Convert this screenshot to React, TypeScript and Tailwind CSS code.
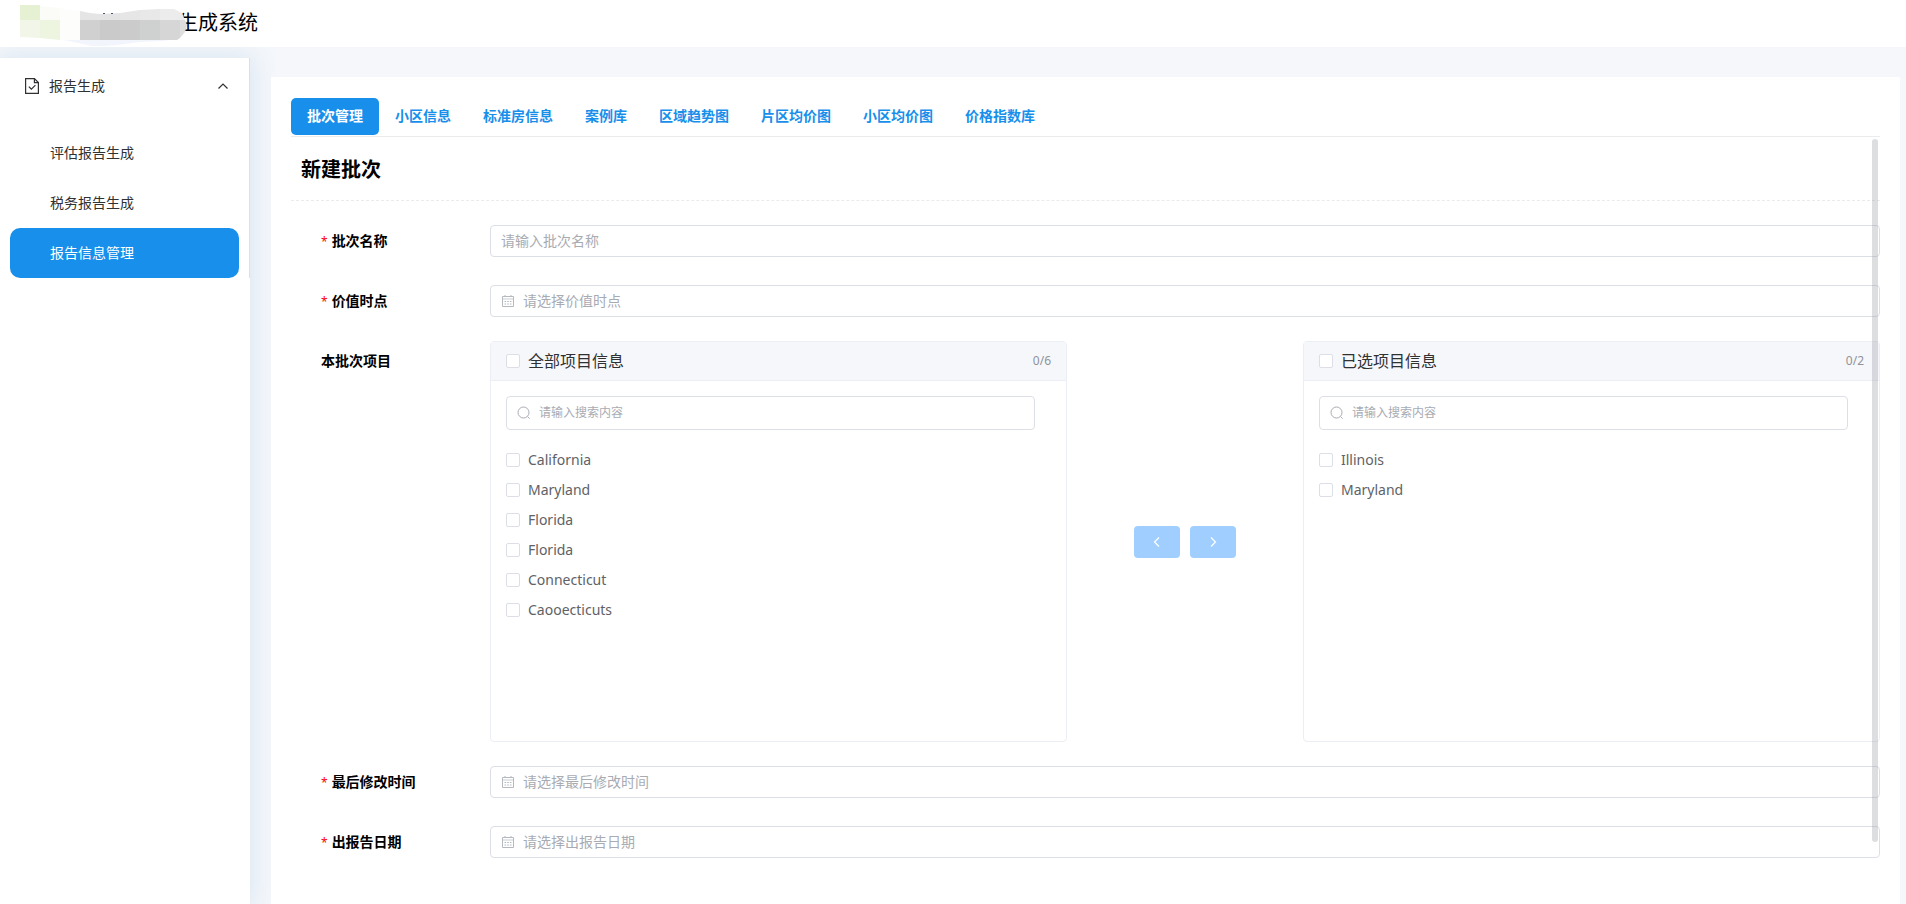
import { useState } from 'react'
import type { ReactNode } from 'react'

const TABS = ['批次管理', '小区信息', '标准房信息', '案例库', '区域趋势图', '片区均价图', '小区均价图', '价格指数库']

const MENU = ['评估报告生成', '税务报告生成', '报告信息管理']

const ALL_PROJECTS = ['California', 'Maryland', 'Florida', 'Florida', 'Connecticut', 'Caooecticuts']
const PICKED_PROJECTS = ['Illinois', 'Maryland']

const CHECKBOX =
  'size-[14px] shrink-0 appearance-none rounded-xs border border-[#dcdfe6] bg-white checked:border-[#188fea] checked:bg-[#188fea]'

function LogoMark() {
  return (
    <svg width="188" height="47" viewBox="0 0 188 47" className="relative z-10 shrink-0" aria-hidden="true">
      <path d="M64 39h112l-14 2-22 1-22 3-14 1H92l-14-3-14-3z" fill="#f2f5fb" />
      <path d="M20 5h20v15H20z" fill="#e6f0d3" />
      <path d="M20 20h20v18l-20-1z" fill="#f2f6e8" />
      <path d="M40 6l20 2v12H40z" fill="#fbfcf8" />
      <path d="M40 20h20v20l-20-2z" fill="#edf4df" />
      <path d="M60 8l20 3v29H60z" fill="#fdfdfb" />
      <path d="M80 11l10 2 10 1v6H80z" fill="#e5e5e5" />
      <path d="M100 14l20-1v7h-20z" fill="#e4e4e4" />
      <path d="M120 13l20-3v10h-20z" fill="#e6e6e6" />
      <path d="M140 10l20-1v11h-20z" fill="#e8e8e8" />
      <path d="M160 9h14l8 4 3 7h-25z" fill="#ececec" />
      <path d="M80 20h20v20H80z" fill="#cfd0cf" />
      <path d="M100 20h20v20h-20z" fill="#cacaca" />
      <path d="M120 20h20v20h-20z" fill="#cbcbcb" />
      <path d="M140 20h20v20h-20z" fill="#cfd0d0" />
      <path d="M160 20h20v18l-3 2h-17z" fill="#d6d6d6" />
      <path d="M180 20h5l2 5-2 7-5 6z" fill="#dedede" />
      <path d="M103 13h2v1h-2zM111 13h2v1h-2z" fill="#4a5a72" />
    </svg>
  )
}

function DocIcon() {
  return (
    <svg width="16" height="18" viewBox="0 0 16 18" fill="none" stroke="#303133" strokeWidth="1.2" aria-hidden="true">
      <path d="M1.6 1.6h8.8l4 4v10.8H1.6z" />
      <path d="M10.4 1.6v4h4" />
      <path d="M4.8 9.6l2.6 2.6 4-4" />
    </svg>
  )
}

function CalendarIcon() {
  return (
    <svg width="14" height="14" viewBox="0 0 14 14" fill="none" stroke="#b4b8bf" aria-hidden="true">
      <path d="M1.5 2.5h11v10h-11z" />
      <path d="M1 5h12" strokeOpacity="0.7" />
      <path d="M4 1v2M10 1v2" />
      <path d="M3.5 7.5h7M3.5 10h7" strokeDasharray="1.6 1.1" />
    </svg>
  )
}

function SearchIcon() {
  return (
    <svg width="14" height="14" viewBox="0 0 14 14" fill="none" stroke="#a8abb2" aria-hidden="true">
      <circle cx="6.5" cy="6.5" r="5.5" />
      <path d="M10.6 10.6l2 2" />
    </svg>
  )
}

function Chevron({ d, className }: { d: string; className?: string }) {
  return (
    <svg
      width="12"
      height="12"
      viewBox="0 0 12 12"
      fill="none"
      stroke="currentColor"
      strokeWidth="1.2"
      className={className}
      aria-hidden="true"
    >
      <path d={d} />
    </svg>
  )
}

function RowLabel({ id, label, required }: { id?: string; label: string; required?: boolean }) {
  const content = (
    <>
      {required ? <span className="mr-1 text-xs font-normal text-[#f00]">*</span> : null}
      {label}
    </>
  )

  // the transfer row labels a whole group, so it has no single control to point at
  return id ? (
    <label htmlFor={id} className="w-[199px] shrink-0 pl-[30px] text-sm leading-8 font-bold text-black">
      {content}
    </label>
  ) : (
    <span className="w-[199px] shrink-0 pl-[30px] text-sm leading-10 font-bold text-black">{content}</span>
  )
}

function FormRow({ id, label, required, children }: { id?: string; label: string; required?: boolean; children: ReactNode }) {
  return (
    <div className="flex items-start">
      <RowLabel id={id} label={label} required={required} />
      <div className="min-w-0 flex-1">{children}</div>
    </div>
  )
}

function TextField({ id, placeholder, date }: { id: string; placeholder: string; date?: boolean }) {
  return (
    <div className="flex h-8 items-center gap-2 rounded border border-[#dcdfe6] bg-white px-[10px]">
      {date ? <CalendarIcon /> : null}
      <input id={id} type="text" placeholder={placeholder} className="min-w-0 flex-1 text-sm outline-none placeholder:text-[#a8abb2]" />
    </div>
  )
}

function TransferPanel({ id, title, items }: { id: string; title: string; items: string[] }) {
  const [checked, setChecked] = useState<number[]>([])

  const toggle = (index: number) => {
    setChecked((prev) => (prev.includes(index) ? prev.filter((i) => i !== index) : [...prev, index]))
  }

  return (
    <section className="min-h-[401px] min-w-0 flex-1 rounded border border-[#ebeef5] bg-white">
      <header className="flex h-[39px] items-center border-b border-[#ebeef5] bg-[#f5f7fb] px-[15px]">
        <label className="flex flex-1 items-center gap-2 text-base text-[#303133]">
          <input
            type="checkbox"
            className={CHECKBOX}
            checked={checked.length === items.length}
            onChange={() => setChecked(checked.length === items.length ? [] : items.map((_, i) => i))}
          />
          {title}
        </label>
        <span className="text-xs text-[#909399]">
          {checked.length}/{items.length}
        </span>
      </header>
      <div className="pt-[15px] pr-[31px] pl-[15px]">
        <div className="flex h-[34px] items-center gap-2 rounded border border-[#dcdfe6] px-[10px]">
          <SearchIcon />
          <input
            id={id}
            type="text"
            aria-label={title}
            placeholder="请输入搜索内容"
            className="min-w-0 flex-1 text-xs outline-none placeholder:text-[#a8abb2]"
          />
        </div>
      </div>
      <ul className="px-[15px] pt-[15px]">
        {items.map((item, index) => (
          <li key={index}>
            <label className="flex h-[30px] items-center gap-2 text-sm text-[#606266]">
              <input type="checkbox" className={CHECKBOX} checked={checked.includes(index)} onChange={() => toggle(index)} />
              {item}
            </label>
          </li>
        ))}
      </ul>
    </section>
  )
}

export default function App() {
  const [activeTab, setActiveTab] = useState(TABS[0])
  const [open, setOpen] = useState(true)

  return (
    <div className="flex min-h-screen flex-col bg-[#f5f7fb] font-['Noto_Sans','Noto_Sans_CJK_SC',sans-serif]">
      <header className="relative z-10 flex h-[47px] items-center bg-white">
        <LogoMark />
        <h1 className="-ml-[10px] pb-0.5 text-xl text-black">生成系统</h1>
      </header>

      <div className="flex flex-1">
        <aside className="mt-[11px] w-[250px] shrink-0 bg-white shadow-[0_0_24px_4px_#dbe7f2]">
          <nav className="border-r border-[#dcdfe6]">
            <button
              type="button"
              onClick={() => setOpen(!open)}
              className="flex h-14 w-full items-center gap-[9px] pr-5 pl-6 text-sm text-[#303133]"
            >
              <DocIcon />
              <span className="flex-1 text-left">报告生成</span>
              <Chevron d="M1.5 8.5L6 4l4.5 4.5" />
            </button>
            {open ? (
              <ul className="pt-[14px]">
                {MENU.map((item) => (
                  <li key={item} className="px-[10px]">
                    <a
                      href="#"
                      className={`flex h-[50px] items-center rounded-[10px] pl-10 text-sm ${
                        item === '报告信息管理' ? 'bg-[#188fea] text-white' : 'text-[#303133]'
                      }`}
                    >
                      {item}
                    </a>
                  </li>
                ))}
              </ul>
            ) : null}
          </nav>
        </aside>

        <main className="mt-[30px] mr-[6px] ml-[21px] min-w-0 flex-1 bg-white px-5 pt-[21px]">
          <div className="flex border-b border-[#ebebeb] pb-px">
            {TABS.map((tab) => (
              <button
                key={tab}
                type="button"
                onClick={() => setActiveTab(tab)}
                className={`h-[37px] rounded-[5px] px-4 pb-0.5 text-sm font-bold ${
                  activeTab === tab ? 'bg-[#188fea] text-white' : 'text-[#188fea]'
                }`}
              >
                {tab}
              </button>
            ))}
          </div>

          <div className="relative">
            <h2 className="flex h-16 items-center border-b border-dashed border-[#ebebeb] pt-0.5 pl-[10px] text-xl font-bold text-black">
              新建批次
            </h2>
            <form className="flex flex-col pt-6">
              <div className="flex flex-col gap-7">
                <FormRow id="batch-name" label="批次名称" required>
                  <TextField id="batch-name" placeholder="请输入批次名称" />
                </FormRow>
                <FormRow id="value-date" label="价值时点" required>
                  <TextField id="value-date" placeholder="请选择价值时点" date />
                </FormRow>
              </div>
              <div className="py-6">
                <FormRow label="本批次项目">
                  <div className="flex items-center">
                    <TransferPanel id="search-all" title="全部项目信息" items={ALL_PROJECTS} />
                    <div className="flex shrink-0 gap-[10px] px-[67px]">
                      <button
                        type="button"
                        aria-label="移到左侧"
                        disabled
                        className="flex h-8 w-[46px] items-center justify-center rounded bg-[#a0cfff] text-white"
                      >
                        <Chevron d="M8 1.5L3.5 6 8 10.5" />
                      </button>
                      <button
                        type="button"
                        aria-label="移到右侧"
                        disabled
                        className="flex h-8 w-[46px] items-center justify-center rounded bg-[#a0cfff] text-white"
                      >
                        <Chevron d="M4 1.5L8.5 6 4 10.5" />
                      </button>
                    </div>
                    <TransferPanel id="search-picked" title="已选项目信息" items={PICKED_PROJECTS} />
                  </div>
                </FormRow>
              </div>
              <div className="flex flex-col gap-7">
                <FormRow id="modified-at" label="最后修改时间" required>
                  <TextField id="modified-at" placeholder="请选择最后修改时间" date />
                </FormRow>
                <FormRow id="report-date" label="出报告日期" required>
                  <TextField id="report-date" placeholder="请选择出报告日期" date />
                </FormRow>
              </div>
            </form>
            <div className="absolute top-[2px] right-[2px] bottom-4 w-[6px] rounded-full bg-[#909399]/30" />
          </div>
        </main>
      </div>
    </div>
  )
}
